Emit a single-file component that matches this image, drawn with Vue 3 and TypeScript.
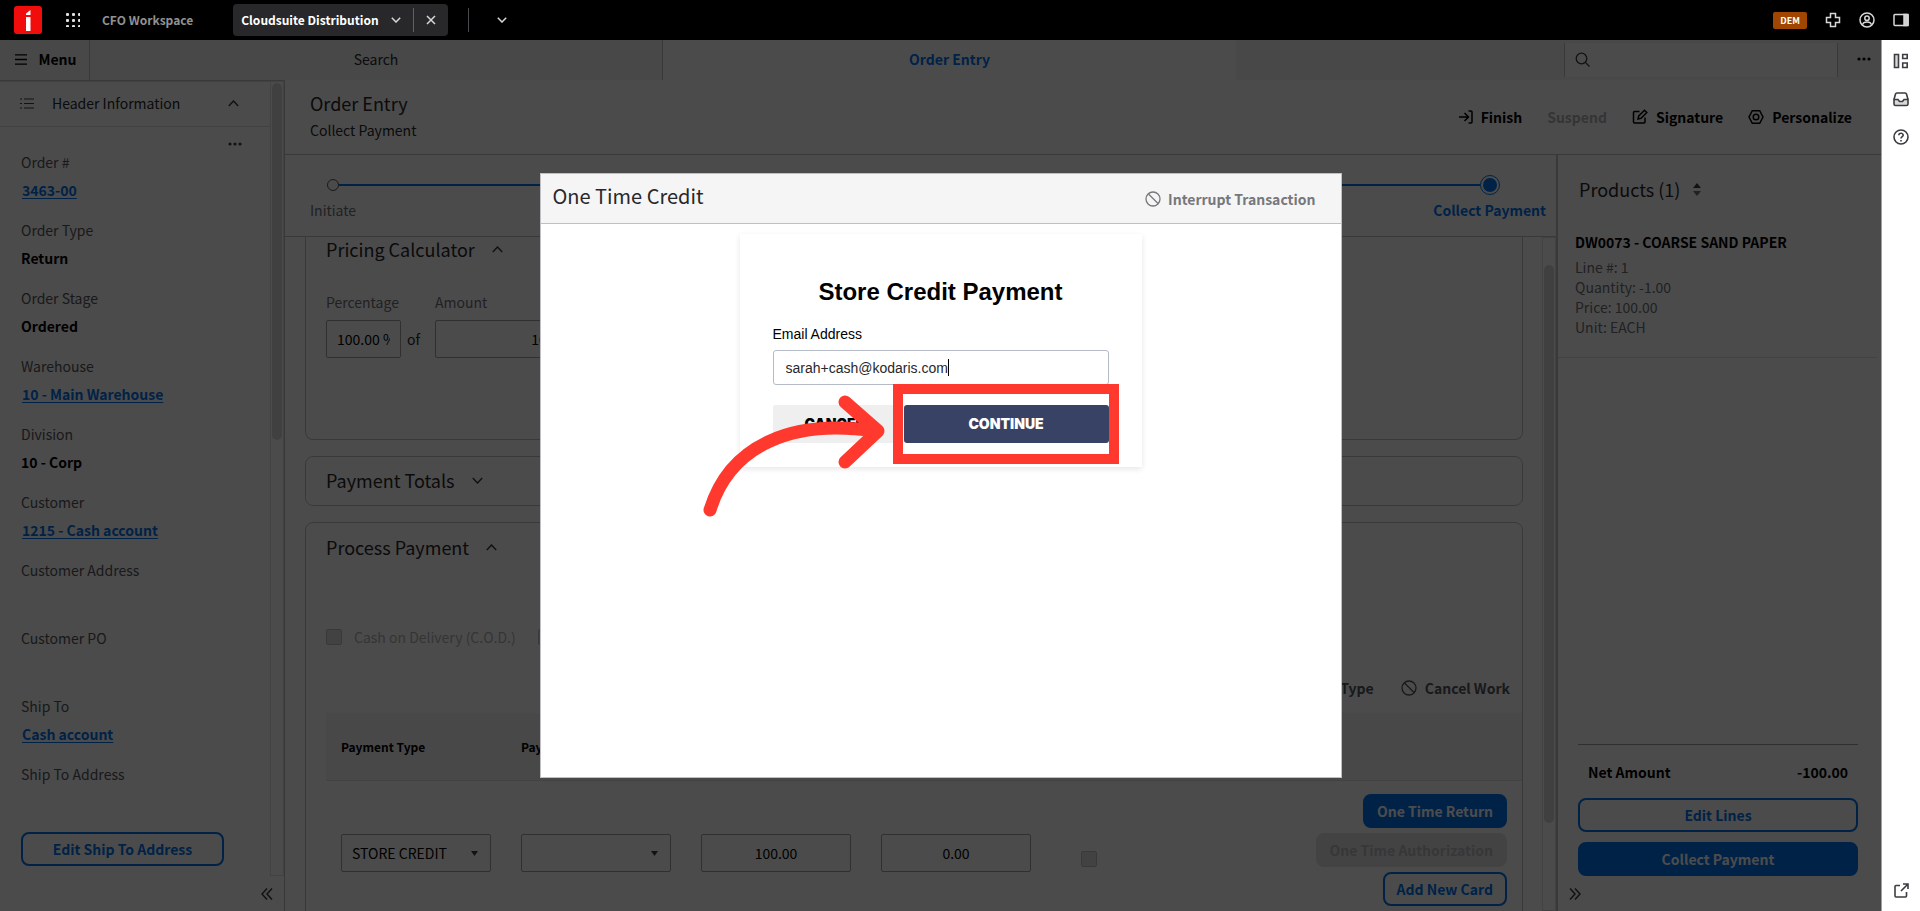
<script setup lang="ts">
import { ref } from 'vue'

interface Field {
  label: string
  value?: string
  link?: boolean
}

const fields: Field[] = [
  { label: 'Order #', value: '3463-00', link: true },
  { label: 'Order Type', value: 'Return' },
  { label: 'Order Stage', value: 'Ordered' },
  { label: 'Warehouse', value: '10 - Main Warehouse', link: true },
  { label: 'Division', value: '10 - Corp' },
  { label: 'Customer', value: '1215 - Cash account', link: true },
  { label: 'Customer Address' },
  { label: 'Customer PO' },
  { label: 'Ship To', value: 'Cash account', link: true },
  { label: 'Ship To Address' },
]

const productDetails: string[] = ['Line #: 1', 'Quantity: -1.00', 'Price: 100.00', 'Unit: EACH']

const gridDots: number[] = [1, 7, 13]
const email = ref('sarah+cash@kodaris.com')
const percentage = ref('100.00 %')
const amount = ref('100.00')
const tendered = ref('100.00')
const change = ref('0.00')
const paymentType = ref('STORE CREDIT')
</script>

<template>
  <div class="app">
    <header class="topbar">
      <svg class="logo" width="28" height="28" viewBox="0 0 28 28" aria-label="Home">
        <rect width="28" height="28" rx="3" fill="#f20d0d" />
        <path d="M12 11h4.500v14H12z" fill="#fff" />
        <path d="M12 9V7.500l4.500-3.500v5z" fill="#fff" />
      </svg>
      <button class="icon-btn apps" aria-label="Applications">
        <svg width="14" height="14" viewBox="0 0 14 14" fill="#e0e0e0">
          <template v-for="y in gridDots" :key="y">
            <rect v-for="x in gridDots" :key="x" :x="x - 1" :y="y - 1" width="3" height="3" rx="1" />
          </template>
        </svg>
      </button>
      <button class="workspace-name">CFO Workspace</button>
      <div class="app-tab">
        <button class="app-tab-name">
          Cloudsuite Distribution
          <svg width="10" height="6" viewBox="0 0 10 6" class="line"><path d="M.8.8 5 5 9.200.8" /></svg>
        </button>
        <button class="app-tab-close" aria-label="Close tab">
          <svg width="10" height="10" viewBox="0 0 10 10" class="line"><path d="m1 1 8 8M9 1 1 9" /></svg>
        </button>
      </div>
      <span class="top-divider"></span>
      <button class="icon-btn" aria-label="More tabs">
        <svg width="10" height="6" viewBox="0 0 10 6" class="line"><path d="M.8.8 5 5 9.200.8" /></svg>
      </button>
      <div class="top-tools">
        <span class="badge">DEM</span>
        <button class="icon-btn" aria-label="Widgets">
          <svg width="16" height="16" viewBox="0 0 16 16" class="line"><path d="M5.500 1.500h5v4h4v5h-4v4h-5v-4h-4v-5h4z" /></svg>
        </button>
        <button class="icon-btn" aria-label="Account">
          <svg width="16" height="16" viewBox="0 0 16 16" class="line">
            <circle cx="8" cy="8" r="7" /><circle cx="8" cy="6.200" r="2.200" />
            <path d="M3.500 12.800c.5-2 2-2.800 4.500-2.800s4 .8 4.500 2.800" />
          </svg>
        </button>
        <button class="icon-btn" aria-label="Toggle panel">
          <svg width="16" height="14" viewBox="0 0 16 14" class="line">
            <rect x="1" y="1.500" width="14" height="11" rx="1" /><path d="M11 1.500h4v11h-4z" fill="#d0d0d0" />
          </svg>
        </button>
      </div>
    </header>

    <div class="body">
      <div class="workspace">
        <nav class="tabbar">
          <button class="menu-btn">
            <svg width="12" height="11" viewBox="0 0 12 11" fill="none" stroke="#000" stroke-width="1.300"><path d="M0 .8h12M0 5.500h12M0 10.200h12" /></svg>
            Menu
          </button>
          <button class="tab">Search</button>
          <button class="tab active">Order Entry</button>
          <label class="search">
            <svg width="16" height="16" viewBox="0 0 16 16" fill="none" stroke="#3c3c42" stroke-width="1.300"><circle cx="6.500" cy="6.500" r="5.300" /><path d="m10.500 10.500 4 4" /></svg>
            <input type="search" aria-label="Search" />
          </label>
          <button class="more" aria-label="More">
            <svg width="14" height="4" viewBox="0 0 14 4" fill="#000"><circle cx="2" cy="2" r="1.600" /><circle cx="7" cy="2" r="1.600" /><circle cx="12" cy="2" r="1.600" /></svg>
          </button>
        </nav>

        <div class="columns">
          <aside class="left">
            <div class="left-scroll">
              <div class="left-main">
                <button class="section-toggle">
                  <svg width="14" height="11" viewBox="0 0 14 11" fill="none" stroke="#3c3c42" stroke-width="1.200"><path d="M0 1h2M4 1h10M0 5.500h2M4 5.500h10M0 10h2M4 10h10" /></svg>
                  <span>Header Information</span>
                  <svg width="11" height="7" viewBox="0 0 11 7" class="chev"><path d="m.8 6 4.700-5 4.700 5" /></svg>
                </button>
                <div class="dots-row">
                  <button aria-label="More actions">
                    <svg width="14" height="4" viewBox="0 0 14 4" fill="#3c3c42"><circle cx="2" cy="2" r="1.600" /><circle cx="7" cy="2" r="1.600" /><circle cx="12" cy="2" r="1.600" /></svg>
                  </button>
                </div>
                <dl class="fields">
                  <div v-for="f in fields" :key="f.label" class="field">
                    <dt>{{ f.label }}</dt>
                    <dd>
                      <a v-if="f.link" href="#">{{ f.value }}</a>
                      <template v-else>{{ f.value }}</template>
                    </dd>
                  </div>
                </dl>
                <button class="btn outline edit-address">Edit Ship To Address</button>
              </div>
              <div class="track"><div class="thumb left-thumb"></div></div>
            </div>
            <button class="collapse to-left" aria-label="Collapse panel">
              <svg width="12" height="12" viewBox="0 0 12 12" class="chev"><path d="M6 .5 1 6l5 5.500M11 .5 6 6l5 5.500" /></svg>
            </button>
          </aside>

          <div class="main">
            <div class="page-head">
              <div class="titles">
                <h1>Order Entry</h1>
                <p>Collect Payment</p>
              </div>
              <div class="actions">
                <button>
                  <svg width="14" height="14" viewBox="0 0 14 14" class="ink"><path d="M0 7h9M5.500 3 9.500 7l-4 4M9.500 1H12a1 1 0 0 1 1 1v10a1 1 0 0 1-1 1H9.500" /></svg>
                  Finish
                </button>
                <button disabled>Suspend</button>
                <button>
                  <svg width="16" height="16" viewBox="0 0 16 16" class="ink"><path d="M7.500 2.500h-5a1 1 0 0 0-1 1V13a1 1 0 0 0 1 1H12a1 1 0 0 0 1-1V8.500M6 10l.7-3L12.500 1.200 14.800 3.500 9 9.300z" /></svg>
                  Signature
                </button>
                <button>
                  <svg width="16" height="16" viewBox="0 0 16 16" class="ink"><path d="M4.300 1.700h7.400L15 8l-3.300 6.300H4.300L1 8z" /><circle cx="8" cy="8" r="2.800" /></svg>
                  Personalize
                </button>
              </div>
            </div>

            <div class="split">
              <div class="center">
                <div class="stepper">
                  <div class="step-line">
                    <span class="step-start"></span>
                    <span class="step-rail"></span>
                    <span class="step-end"></span>
                  </div>
                  <div class="step-labels"><span>Initiate</span><strong>Collect Payment</strong></div>
                </div>

                <div class="center-scroll">
                  <div class="cards">
                    <section class="card calculator">
                      <h2>Pricing Calculator <svg width="11" height="7" viewBox="0 0 11 7" class="chev"><path d="m.8 6 4.700-5 4.700 5" /></svg></h2>
                      <div class="calc-grid">
                        <label for="pct">Percentage</label><span></span><label for="amt">Amount</label>
                        <input id="pct" v-model="percentage" /><span class="of">of</span><input id="amt" v-model="amount" class="right" />
                      </div>
                    </section>

                    <section class="card totals">
                      <h2>Payment Totals <svg width="11" height="7" viewBox="0 0 11 7" class="chev"><path d="m.8 1 4.700 5 4.700-5" /></svg></h2>
                    </section>

                    <section class="card process">
                      <h2>Process Payment <svg width="11" height="7" viewBox="0 0 11 7" class="chev"><path d="m.8 6 4.700-5 4.700 5" /></svg></h2>
                      <div class="checks">
                        <label><input type="checkbox" disabled />Cash on Delivery (C.O.D.)</label>
                        <label><input type="checkbox" disabled />Bill Customer</label>
                      </div>
                      <div class="toolbar">
                        <button>Change Payment Type</button>
                        <button>
                          <svg width="16" height="16" viewBox="0 0 16 16" fill="none" stroke="currentColor" stroke-width="1.300"><circle cx="8" cy="8" r="7" /><path d="m3.500 3 9.500 9.500" /></svg>
                          Cancel Work
                        </button>
                      </div>
                      <table>
                        <colgroup><col class="c" /><col class="c" /><col class="c" /><col class="c" /><col class="c" /><col /></colgroup>
                        <thead>
                          <tr><th>Payment Type</th><th>Payment Method</th><th>Amount</th><th>Change</th><th></th><th></th></tr>
                        </thead>
                        <tbody>
                          <tr>
                            <td>
                              <div class="select">
                                <select v-model="paymentType" aria-label="Payment Type"><option>STORE CREDIT</option></select>
                                <svg width="7" height="5" viewBox="0 0 7 5"><path d="M0 0h7L3.500 5z" fill="#3c3c42" /></svg>
                              </div>
                            </td>
                            <td>
                              <div class="select">
                                <select aria-label="Payment Method"><option></option></select>
                                <svg width="7" height="5" viewBox="0 0 7 5"><path d="M0 0h7L3.500 5z" fill="#3c3c42" /></svg>
                              </div>
                            </td>
                            <td><input v-model="tendered" class="num" aria-label="Amount" /></td>
                            <td><input v-model="change" class="num" aria-label="Change" /></td>
                            <td class="tick"><input type="checkbox" disabled aria-label="Apply" /></td>
                            <td class="ops">
                              <div class="row-actions">
                                <button class="btn solid">One Time Return</button>
                                <button class="btn off" disabled>One Time Authorization</button>
                                <button class="btn outline">Add New Card</button>
                              </div>
                            </td>
                          </tr>
                        </tbody>
                      </table>
                    </section>
                  </div>
                  <div class="track"><div class="thumb center-thumb"></div></div>
                </div>
              </div>

              <aside class="products">
                <h2>Products (1)
                  <svg width="8" height="13" viewBox="0 0 8 13"><path d="M0 5h8L4 0z" fill="#3c3c42" /><path d="M0 8h8l-4 5z" fill="#6f6f76" /></svg>
                </h2>
                <div class="product">
                  <strong>DW0073 - COARSE SAND PAPER</strong>
                  <span v-for="d in productDetails" :key="d">{{ d }}</span>
                </div>
                <div class="summary">
                  <div class="net"><span>Net Amount</span><span>-100.00</span></div>
                  <button class="btn outline">Edit Lines</button>
                  <button class="btn solid">Collect Payment</button>
                </div>
                <button class="collapse" aria-label="Collapse products">
                  <svg width="12" height="12" viewBox="0 0 12 12" class="chev"><path d="m1 .5 5 5.500-5 5.500M6 .5 11 6l-5 5.500" /></svg>
                </button>
              </aside>
            </div>
          </div>
        </div>

        <div class="overlay">
          <div class="modal" role="dialog" aria-modal="true" aria-labelledby="modal-title">
            <div class="modal-head">
              <h2 id="modal-title">One Time Credit</h2>
              <button>
                <svg width="16" height="16" viewBox="0 0 16 16" fill="none" stroke="currentColor" stroke-width="1.300"><circle cx="8" cy="8" r="7" /><path d="m3.500 3 9.500 9.500" /></svg>
                Interrupt Transaction
              </button>
            </div>
            <form class="credit" @submit.prevent>
              <h3>Store Credit Payment</h3>
              <label for="email">Email Address</label>
              <div class="email-box">
                <input id="email" v-model="email" type="text" />
                <span class="caret"></span>
              </div>
              <div class="buttons">
                <button type="button" class="cancel">CANCEL</button>
                <button type="submit" class="continue">CONTINUE</button>
              </div>
              <div class="highlight"></div>
              <svg class="arrow" width="190" height="130" viewBox="0 0 190 130" fill="none" stroke="#ff392d" stroke-width="13" stroke-linecap="round" stroke-linejoin="round">
                <path d="M10 119C30 54 92 28 174 40" />
                <path d="M145 11 178 40 145 71" />
              </svg>
            </form>
          </div>
        </div>
      </div>

      <aside class="rail">
        <button aria-label="Widgets">
          <svg width="16" height="16" viewBox="0 0 16 16" class="dark"><path d="M1.500 1.500h4v13h-4z" fill="#d8d8d8" /><path d="M9.700 1.500h4.500v4H9.700zM9.700 10h4.500v4.500H9.700z" /></svg>
        </button>
        <button aria-label="Inbox">
          <svg width="16" height="16" viewBox="0 0 16 16" class="dark"><path d="M1 8.500h4l1.500 2h3l1.500-2h4V13a1.500 1.500 0 0 1-1.500 1.500h-11A1.500 1.500 0 0 1 1 13z" fill="#d8d8d8" /><path d="M1 8.500 2.500 3A1.500 1.500 0 0 1 4 2h8a1.500 1.500 0 0 1 1.500 1L15 8.500" /></svg>
        </button>
        <button aria-label="Help">
          <svg width="16" height="16" viewBox="0 0 16 16" class="dark"><circle cx="8" cy="8" r="7" /><path d="M5.800 6.300C5.900 3.600 10.200 3.700 10.200 6.200 10.200 7.600 8 7.800 8 9.500M8 11v1.500" /></svg>
        </button>
        <button class="launch" aria-label="Open in new window">
          <svg width="15" height="15" viewBox="0 0 15 15" class="dark"><path d="M6 2.500H2a1 1 0 0 0-1 1V13a1 1 0 0 0 1 1h9.500a1 1 0 0 0 1-1V9M9 1h5v5M14 1 7 8" /></svg>
        </button>
      </aside>
    </div>
  </div>
</template>

<style>
html,
body {
  margin: 0;
  overflow: hidden;
}
</style>

<style scoped>
.app {
  --blue: #0072ed;
  --line: #c0c0c4;
  --strong: 700;
  display: flex;
  flex-direction: column;
  height: 100vh;
  overflow: hidden;
  font-family: 'Noto Sans CJK SC', 'Noto Sans', sans-serif;
  font-size: 14px;
  line-height: 20px;
  color: #28282a;
}
.app *,
.app *::before {
  box-sizing: border-box;
}
button,
input,
select {
  font: inherit;
  color: inherit;
  margin: 0;
}
button {
  display: inline-flex;
  align-items: center;
  justify-content: center;
  padding: 0;
  border: 0;
  background: none;
  white-space: nowrap;
}
h1,
h2,
h3,
p,
dl,
dd {
  margin: 0;
  font-weight: 400;
}
svg {
  flex: none;
}
.line {
  fill: none;
  stroke: #d8d8d8;
  stroke-width: 1.500;
}
.chev {
  fill: none;
  stroke: #3c3c42;
  stroke-width: 1.500;
}
.ink {
  fill: none;
  stroke: #000;
  stroke-width: 1.500;
}
.dark {
  fill: none;
  stroke: #3c3c42;
  stroke-width: 1.600;
}

/* Top bar */
.topbar {
  display: flex;
  align-items: center;
  flex: none;
  height: 40px;
  padding: 0 11px 0 14px;
  background: #000;
  font-size: 12px;
}
.apps {
  margin: 0 22px 0 24px;
}
.workspace-name {
  color: #919191;
  font-weight: var(--strong);
  margin-right: 40px;
}
.app-tab {
  display: flex;
  align-items: center;
  height: 32px;
  border-radius: 4px;
  background: #28282a;
  color: #fff;
}
.app-tab-name {
  gap: 12px;
  padding: 0 12px 0 8px;
  font-weight: var(--strong);
}
.app-tab-close {
  height: 24px;
  padding: 0 12px;
  border-left: 1px solid #606066;
}
.top-divider {
  width: 1px;
  height: 24px;
  margin: 0 28px 0 20px;
  background: #48484d;
}
.top-tools {
  display: flex;
  align-items: center;
  gap: 18px;
  margin-left: auto;
}
.badge {
  padding: 0 7px;
  border-radius: 2px;
  background: #a14600;
  color: #fff;
  font-size: 9px;
  font-weight: 700;
  line-height: 17px;
}

/* Shell */
.body {
  display: flex;
  flex: 1;
  min-height: 0;
}
.workspace {
  position: relative;
  display: flex;
  flex: 1;
  flex-direction: column;
  min-width: 0;
  background: #fcfcfc;
  overflow: hidden;
}
.rail {
  display: flex;
  flex-direction: column;
  align-items: center;
  gap: 22px;
  width: 39px;
  padding: 13px 0;
  border-left: 1px solid #a0a0a4;
  background: #fff;
}
.launch {
  margin-top: auto;
}

.tabbar {
  display: flex;
  flex: none;
  height: 40px;
  background: #f0f0f0;
}
.tabbar > button {
  padding-bottom: 2px;
}
.menu-btn {
  gap: 12px;
  width: 90px;
  padding-left: 2px;
  border-right: 1px solid var(--line);
  color: #000;
  font-weight: var(--strong);
}
.tab {
  flex: 0 1 573px;
  border-right: 1px solid var(--line);
}
.tab.active {
  border-right: 0;
  background: #fcfcfc;
  color: var(--blue);
  font-weight: var(--strong);
}
.search {
  display: flex;
  align-items: center;
  width: 274px;
  height: 34px;
  margin: 3px 0 0 auto;
  padding: 0 10px;
  border: solid var(--line);
  border-width: 0 1px;
  background: #fcfcfc;
}
.search input {
  flex: 1;
  min-width: 0;
  border: 0;
  background: none;
}
.more {
  width: 43px;
  padding-left: 8px;
}

.columns {
  display: flex;
  flex: 1;
  min-height: 0;
}
.left {
  display: flex;
  flex-direction: column;
  flex: none;
  width: 285px;
  border-top: 1px solid var(--line);
  border-right: 1px solid var(--line);
}
.left-scroll {
  display: flex;
  flex: 1;
  min-height: 0;
}
.left-main {
  flex: 1;
  min-width: 0;
  overflow: hidden;
}
.track {
  flex: none;
  width: 14px;
  border: 1px solid #dcdcde;
}
.thumb {
  width: 10px;
  margin: 1px;
  border-radius: 5px;
  background: #d8d8da;
}
.left-thumb {
  height: 45%;
}
.section-toggle {
  display: flex;
  justify-content: flex-start;
  width: 100%;
  height: 46px;
  padding: 0 31px 2px 20px;
  border: solid #dcdcde;
  border-width: 1px 0;
  gap: 18px;
}
.section-toggle .chev {
  margin-left: auto;
}
.dots-row {
  display: flex;
  justify-content: flex-end;
  height: 22px;
  padding: 15px 28px 0 0;
}
.dots-row button {
  height: 4px;
}
.field {
  height: 68px;
  padding: 3px 0 0 21px;
}
.field dt {
  margin-bottom: 8px;
  color: #55555b;
}
.field dd {
  color: #000;
  font-weight: var(--strong);
}
.field a {
  padding-left: 1px;
  color: var(--blue);
  text-underline-offset: 2px;
}
.collapse {
  flex: none;
  height: 35px;
}
.collapse.to-left {
  justify-content: flex-end;
  padding-right: 11px;
}

/* Buttons */
.btn {
  height: 34px;
  padding: 0 12px;
  border: 2px solid var(--blue);
  border-radius: 8px;
  font-weight: var(--strong);
}
.outline {
  color: var(--blue);
}
.solid {
  background: var(--blue);
  color: #fff;
}
.off {
  border-color: #e0e0e1;
  background: #e0e0e1;
  color: #b8b8bc;
}
.edit-address {
  width: 203px;
  margin: 3px 0 0 21px;
}

/* Main page */
.main {
  display: flex;
  flex: 1;
  flex-direction: column;
  min-width: 0;
}
.page-head {
  display: flex;
  align-items: center;
  justify-content: space-between;
  flex: none;
  height: 75px;
  padding: 0 29px 0 25px;
  border-bottom: 1px solid var(--line);
}
.titles {
  padding-bottom: 3px;
}
h1 {
  margin-bottom: 5px;
  font-size: 18px;
  line-height: 24px;
}
h2 {
  display: flex;
  align-items: center;
  font-size: 18px;
  line-height: 22px;
}
.actions {
  display: flex;
  gap: 25px;
  color: #000;
  font-weight: var(--strong);
}
.actions button {
  gap: 8px;
}
.actions button:disabled {
  color: #b0b0b4;
}
.split {
  display: flex;
  flex: 1;
  min-height: 0;
}
.center {
  display: flex;
  flex: 1;
  flex-direction: column;
  min-width: 0;
}
.stepper {
  flex: none;
  height: 82px;
  padding: 20px 10px 0 25px;
  border-bottom: 1px solid var(--line);
}
.step-line {
  display: flex;
  align-items: center;
  margin: 0 46px 0 17px;
}
.step-start {
  width: 12px;
  height: 12px;
  border: 1px solid #55555b;
  border-radius: 50%;
}
.step-rail {
  flex: 1;
  height: 2px;
  background: var(--blue);
}
.step-end {
  width: 20px;
  height: 20px;
  padding: 2px;
  border: 1px solid var(--blue);
  border-radius: 50%;
  background: var(--blue) content-box;
}
.step-labels {
  display: flex;
  justify-content: space-between;
  margin-top: 5px;
  color: #6f6f76;
}
.step-labels strong {
  color: var(--blue);
  font-weight: var(--strong);
}
.center-scroll {
  display: flex;
  flex: 1;
  min-height: 0;
  overflow: hidden;
}
.cards {
  flex: 1;
  min-width: 0;
  padding: 0 19px 0 20px;
}
.card {
  margin-bottom: 16px;
  padding-left: 20px;
  border: 1px solid var(--line);
  border-radius: 8px;
}
.card h2 svg {
  margin-left: 17px;
}
.calculator {
  height: 203px;
  border-top: 0;
  border-radius: 0 0 8px 8px;
}
.calculator h2 {
  line-height: 24px;
}
.calc-grid {
  display: grid;
  grid-template-columns: 75px 34px 150px;
  align-items: center;
  row-gap: 8px;
  margin-top: 31px;
}
.calc-grid label {
  color: #6f6f76;
}
.of {
  padding-left: 6px;
}
.card input:not([type='checkbox']),
select {
  width: 100%;
  height: 38px;
  padding: 0 10px;
  border: 1px solid #a0a0a4;
  border-radius: 2px;
  background: #fcfcfc;
  color: #000;
}
.card input.right {
  text-align: right;
}
.card input.num {
  text-align: center;
}
.totals {
  display: flex;
  align-items: center;
  height: 50px;
  padding-bottom: 2px;
}
.process {
  height: 460px;
  padding-top: 13px;
  margin-bottom: 0;
  border-radius: 8px 8px 0 0;
}
.checks {
  display: flex;
  gap: 22px;
  margin-top: 69px;
  color: #b0b0b4;
}
.checks label {
  display: flex;
  align-items: center;
  gap: 12px;
}
[type='checkbox'] {
  appearance: none;
  width: 16px;
  height: 16px;
  border: 1px solid #c0c0c4;
  border-radius: 2px;
  background: #dcdcde;
}
.toolbar {
  display: flex;
  justify-content: flex-end;
  gap: 27px;
  margin-top: 31px;
  padding-right: 12px;
  color: #55555b;
  font-weight: var(--strong);
}
.toolbar button {
  gap: 8px;
}
table {
  width: 100%;
  margin-top: 15px;
  border-collapse: collapse;
  table-layout: fixed;
}
.c {
  width: 180px;
}
th {
  height: 67px;
  padding: 2px 15px 0;
  border-bottom: 1px solid #dcdcde;
  background: #f0f0f0;
  color: #000;
  font-size: 12px;
  font-weight: var(--strong);
  text-align: left;
}
td {
  padding: 20px 15px 0;
}
td.tick {
  padding: 32px 35px 0;
}
td.ops {
  padding-top: 13px;
}
td.tick input {
  display: block;
}
.select {
  position: relative;
}
select {
  display: block;
  appearance: none;
}
.select svg {
  position: absolute;
  top: 17px;
  right: 13px;
}
.row-actions {
  display: flex;
  flex-direction: column;
  align-items: flex-end;
  gap: 5px;
}
.center-thumb {
  height: 83%;
  margin-top: 27px;
}

/* Products pane */
.products {
  display: flex;
  flex: none;
  flex-direction: column;
  align-items: stretch;
  width: 325px;
  border-left: 2px solid var(--line);
}
.products h2 {
  gap: 13px;
  margin: 23px 0 32px 21px;
}
.product {
  display: flex;
  flex-direction: column;
  margin-right: 4px;
  padding: 0 0 20px 17px;
  border-bottom: 1px solid #dcdcde;
  color: #6f6f76;
}
.product strong {
  margin-bottom: 5px;
  color: #000;
  font-weight: var(--strong);
}
.summary {
  display: flex;
  flex-direction: column;
  gap: 10px;
  margin: auto 23px 0 20px;
  border-top: 1px solid #a0a0a4;
}
.net {
  display: flex;
  justify-content: space-between;
  padding: 17px 10px 6px;
  color: #000;
  font-weight: var(--strong);
}
.products .collapse {
  justify-content: flex-start;
  padding-left: 11px;
}

/* Dialog */
.overlay {
  position: absolute;
  inset: 0;
  display: flex;
  align-items: center;
  justify-content: center;
  background: rgba(0, 0, 0, 0.7);
}
.modal {
  display: flex;
  flex-direction: column;
  align-items: center;
  width: 802px;
  min-height: 605px;
  border: 1px solid #c0c0c4;
  background: #fff;
}
.modal-head {
  display: flex;
  align-items: center;
  justify-content: space-between;
  width: 100%;
  height: 50px;
  padding: 0 25px 0 12px;
  border-bottom: 1px solid #c0c0c4;
  background: #f5f5f5;
}
.modal-head h2 {
  padding-bottom: 5px;
  font-size: 20px;
}
.modal-head button {
  gap: 7px;
  color: #77777c;
  font-weight: var(--strong);
}
.credit {
  position: relative;
  display: flex;
  flex-direction: column;
  width: 402px;
  margin-top: 10px;
  padding: 44px 33px 24px;
  box-shadow: 0 2px 6px rgba(0, 0, 0, 0.1);
  color: #000;
  font-family: 'Liberation Sans', Arial, sans-serif;
}
.credit h3 {
  margin-bottom: 18px;
  font-size: 24px;
  font-weight: 700;
  line-height: 28px;
  text-align: center;
}
.email-box {
  position: relative;
  margin: 6px 0 20px;
}
.email-box input {
  display: block;
  width: 100%;
  height: 35px;
  padding: 0 12px;
  border: 1px solid #b4bac6;
  border-radius: 3px;
  color: #28282a;
}
.caret {
  position: absolute;
  top: 9px;
  left: 175px;
  width: 1px;
  height: 17px;
  background: #000;
}
.buttons {
  display: flex;
  gap: 8px;
  font-family: Inter, sans-serif;
  font-size: 14px;
  font-weight: 900;
}
.buttons button {
  height: 38px;
  border-radius: 3px;
}
.cancel {
  flex: 1;
  background: #efefef;
}
.continue {
  flex: none;
  width: 205px;
  background: #384264;
  color: #fff;
}
.highlight {
  position: absolute;
  top: 150px;
  right: 23px;
  width: 226px;
  height: 80px;
  border: 10px solid #ff392d;
}
.arrow {
  position: absolute;
  top: 157px;
  left: -40px;
}
</style>
